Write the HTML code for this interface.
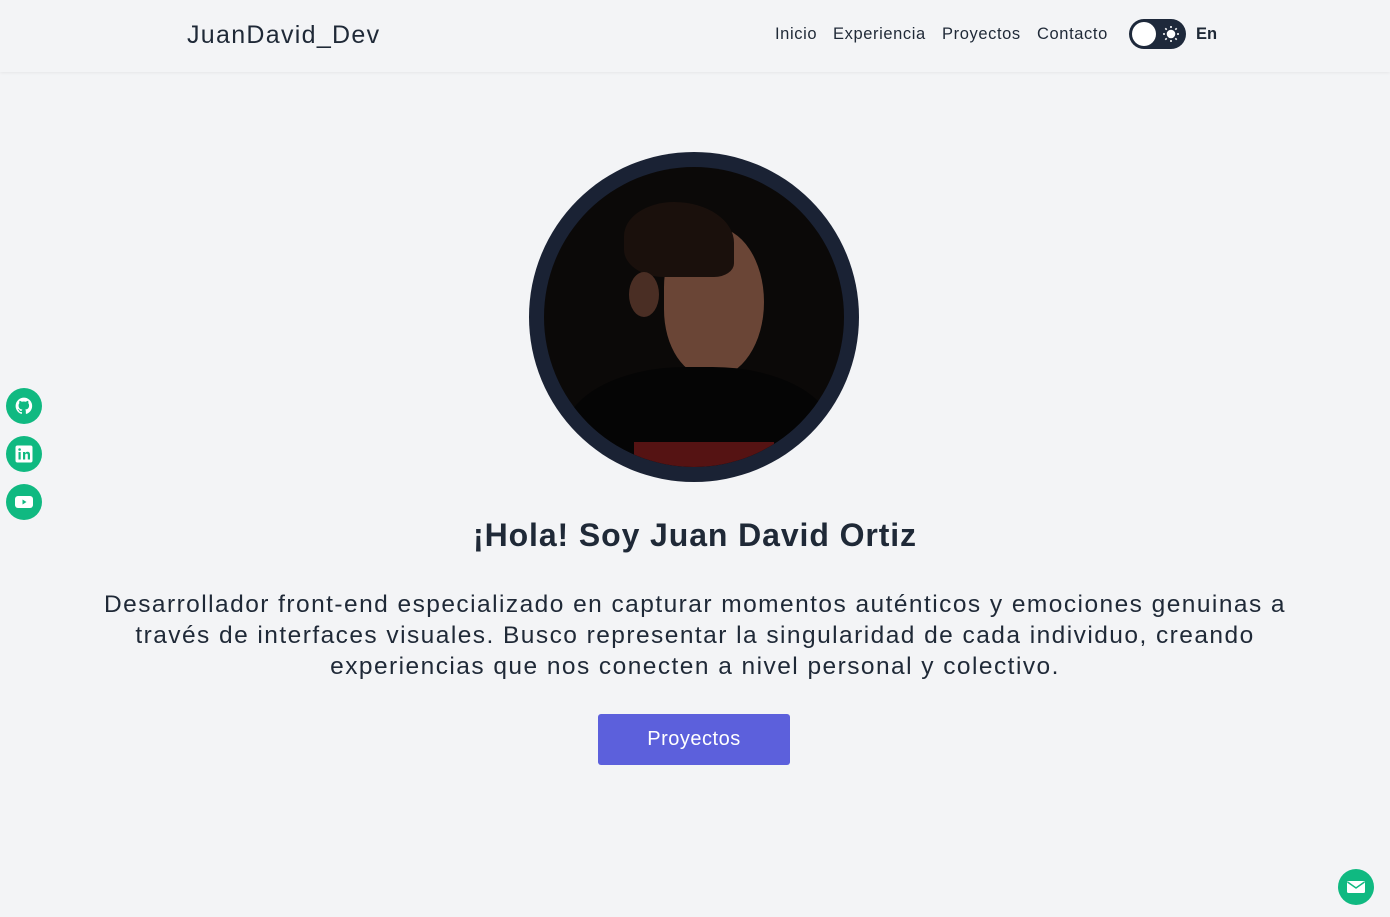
<!DOCTYPE html>
<html><head><meta charset="utf-8"><style>
*{margin:0;padding:0;box-sizing:border-box}
body{width:1390px;height:917px;background:#f3f4f6;font-family:"Liberation Sans",sans-serif;color:#1f2937;position:relative;overflow:hidden}
.nav{position:absolute;top:0;left:0;width:1390px;height:72px;background:#f3f4f6;box-shadow:0 1px 3px rgba(0,0,0,.06)}
.logo{position:absolute;left:187px;top:21px;font-size:25px;letter-spacing:1.3px;color:#1f2937}
.links{position:absolute;top:25px;font-size:16.5px;letter-spacing:.6px}
.links span{position:absolute;white-space:nowrap}
.tog{position:absolute;left:1129px;top:19px;width:57px;height:30px;border-radius:15px;background:#1e293b}
.tog .k{position:absolute;left:3px;top:3px;width:24px;height:24px;border-radius:50%;background:#fff}
.en{position:absolute;left:1196px;top:25px;font-size:16.5px;font-weight:bold}
.soc{position:absolute;left:6px;width:36px;height:36px;border-radius:50%;background:#10b981;display:flex;align-items:center;justify-content:center}
.av{position:absolute;left:529px;top:152px;width:330px;height:330px;border-radius:50%;background:#1a2234;padding:15px}
.ph{width:100%;height:100%;border-radius:50%;background:#0b0908;overflow:hidden;position:relative}
h1{position:absolute;top:517px;width:1390px;text-align:center;font-size:32px;font-weight:bold;left:0;letter-spacing:.9px}
p{position:absolute;top:589px;left:0;width:1390px;text-align:center;font-size:24.5px;line-height:31px;color:#1f2937;letter-spacing:1.45px;white-space:nowrap}
.btn{position:absolute;left:598px;top:714px;width:192px;height:51px;background:#5c60dc;border-radius:3px;color:#fff;font-size:20px;text-align:center;line-height:51px;letter-spacing:.5px}
.mail{position:absolute;left:1338px;top:869px;width:36px;height:36px;border-radius:50%;background:#10b981;display:flex;align-items:center;justify-content:center}
</style></head><body>
<div class="nav">
<div class="logo">JuanDavid_Dev</div>
<div class="links"><span style="left:775px">Inicio</span><span style="left:833px">Experiencia</span><span style="left:942px">Proyectos</span><span style="left:1037px">Contacto</span></div>
<div class="tog"><div class="k"></div>
<svg style="position:absolute;left:33px;top:6px" width="18" height="18" viewBox="0 0 18 18" stroke="#fff" stroke-width="1.6" fill="#fff"><circle cx="9" cy="9" r="3.5"/><path d="M9 1v2M9 15v2M1 9h2M15 9h2M3.3 3.3l1.4 1.4M13.3 13.3l1.4 1.4M3.3 14.7l1.4-1.4M13.3 4.7l1.4-1.4"/></svg></div>
<div class="en">En</div>
</div>
<div class="soc" style="top:388px"><svg width="20" height="20" viewBox="0 0 24 24" fill="#fff"><path d="M12 2a10 10 0 0 0-3.2 19.5c.5.1.7-.2.7-.5v-1.8c-2.8.6-3.4-1.3-3.4-1.3-.4-1.2-1.1-1.5-1.1-1.5-.9-.6.1-.6.1-.6 1 .1 1.5 1 1.5 1 .9 1.5 2.4 1.1 2.9.8.1-.6.4-1.1.6-1.3-2.2-.3-4.6-1.1-4.6-5 0-1.1.4-2 1-2.7-.1-.3-.4-1.3.1-2.7 0 0 .8-.3 2.7 1a9.4 9.4 0 0 1 5 0c1.9-1.3 2.7-1 2.7-1 .5 1.4.2 2.4.1 2.7.6.7 1 1.6 1 2.7 0 3.9-2.3 4.7-4.6 5 .4.3.7.9.7 1.9V21c0 .3.2.6.7.5A10 10 0 0 0 12 2z"/></svg></div>
<div class="soc" style="top:436px"><svg width="18" height="18" viewBox="0 0 18 18"><rect x="0.5" y="0.5" width="17" height="17" rx="2" fill="#fff"/><rect x="3.5" y="7" width="2.2" height="7.5" fill="#10b981"/><circle cx="4.6" cy="4.5" r="1.3" fill="#10b981"/><path d="M8 7h2v1.2c.5-.9 1.4-1.4 2.5-1.4 1.8 0 2.5 1.1 2.5 3v4.7h-2.2v-4.3c0-1-.3-1.6-1.2-1.6s-1.4.6-1.4 1.6v4.3H8z" fill="#10b981"/></svg></div>
<div class="soc" style="top:484px"><svg width="20" height="16" viewBox="0 0 20 16"><rect x="1" y="2" width="18" height="12" rx="3" fill="#fff"/><path d="M8.5 5.5v5l4-2.5z" fill="#10b981"/></svg></div>
<div class="av"><div class="ph">
<div style="position:absolute;left:120px;top:60px;width:100px;height:150px;border-radius:40% 50% 50% 45%;background:#6a4536"></div>
<div style="position:absolute;left:80px;top:35px;width:110px;height:75px;border-radius:50% 60% 20% 40%;background:#1a100c"></div>
<div style="position:absolute;left:85px;top:105px;width:30px;height:45px;border-radius:50%;background:#4a2e24"></div>
<div style="position:absolute;left:20px;top:200px;width:270px;height:150px;border-radius:45% 45% 0 0;background:#050505"></div>
<div style="position:absolute;left:90px;top:275px;width:140px;height:30px;background:#8a1c1c;opacity:.6"></div>
</div></div>
<h1>¡Hola! Soy Juan David Ortiz</h1>
<p>Desarrollador front-end especializado en capturar momentos auténticos y emociones genuinas a<br>través de interfaces visuales. Busco representar la singularidad de cada individuo, creando<br>experiencias que nos conecten a nivel personal y colectivo.</p>
<div class="btn">Proyectos</div>
<div class="mail"><svg width="20" height="16" viewBox="0 0 20 16"><rect x="1" y="2" width="18" height="12" rx="1.5" fill="#fff"/><path d="M1.5 3l8.5 6 8.5-6" stroke="#10b981" stroke-width="1.5" fill="none"/></svg></div>
</body></html>
